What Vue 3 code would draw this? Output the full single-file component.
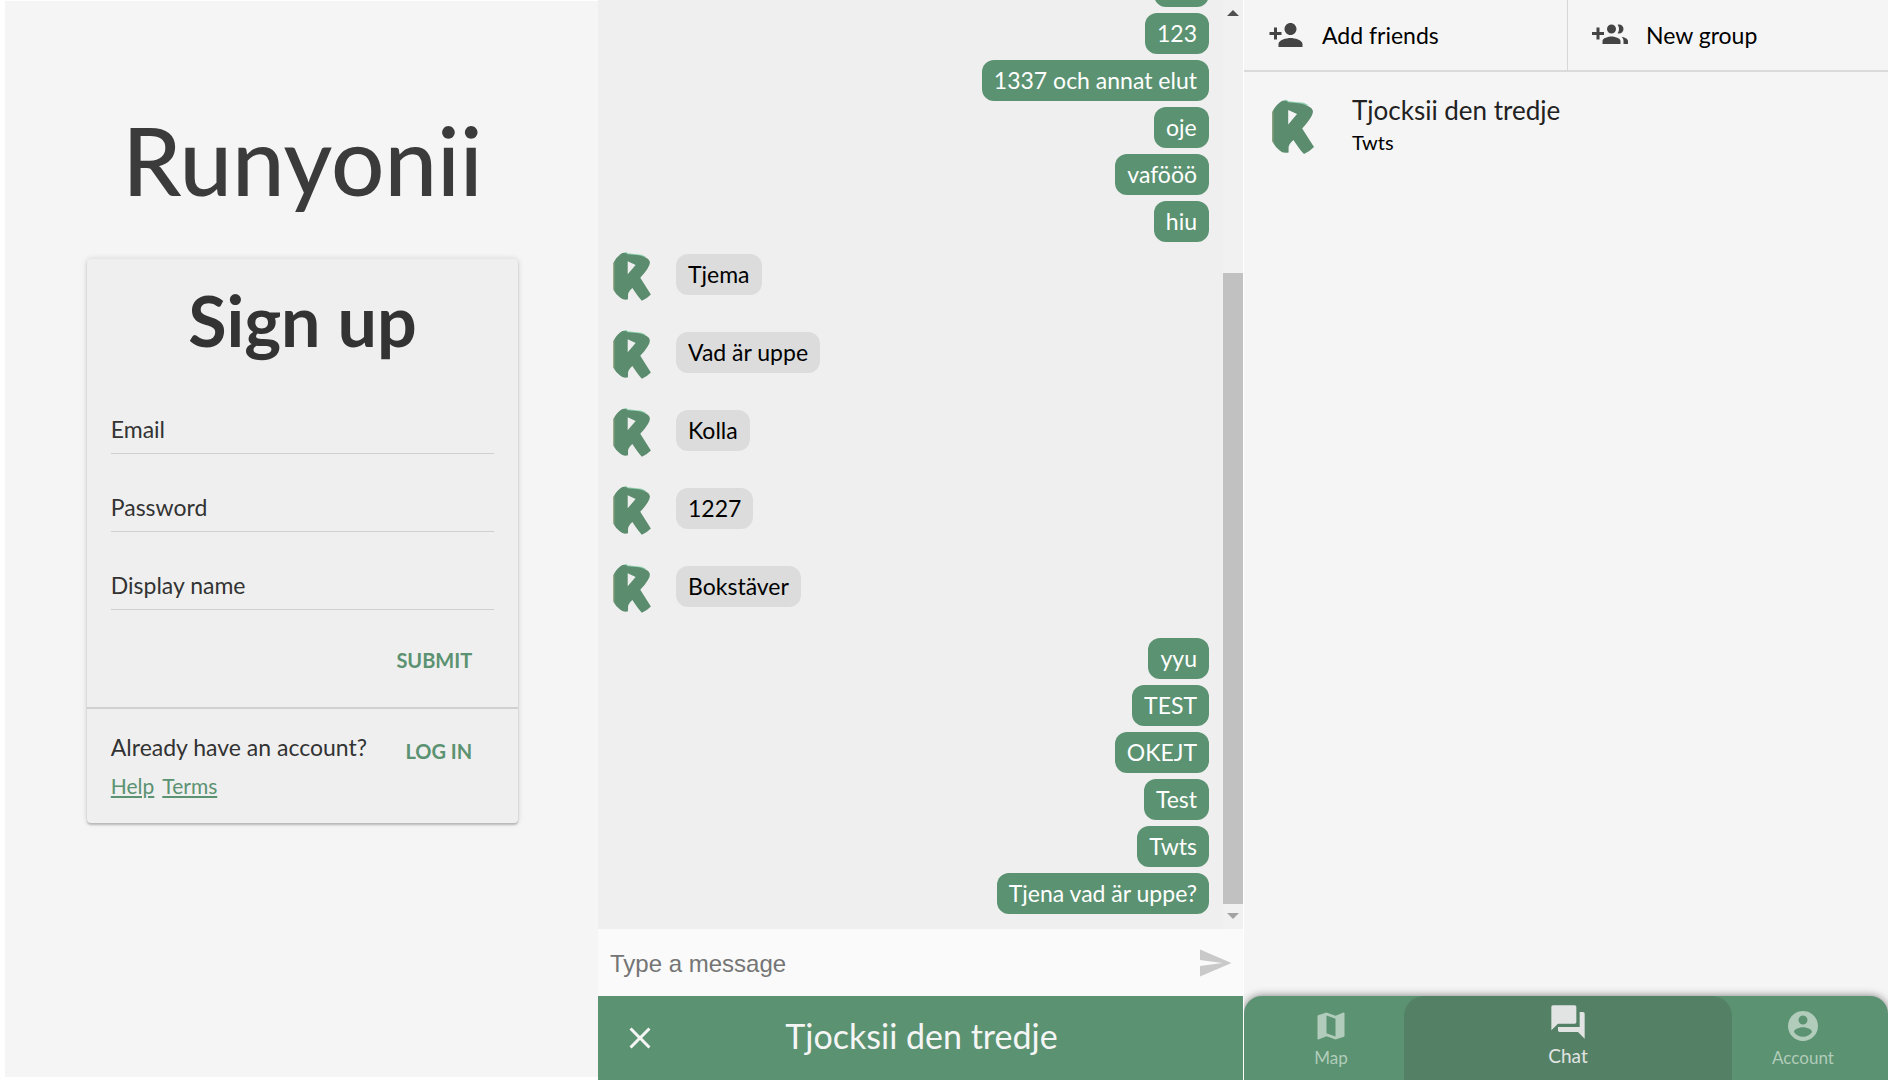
<script setup>
import { ref } from 'vue'

const fields = [
  { id: 'email', label: 'Email', type: 'email' },
  { id: 'password', label: 'Password', type: 'password' },
  { id: 'name', label: 'Display name', type: 'text' }
]

const messages = [
  { own: true, text: '' },
  { own: true, text: '123' },
  { own: true, text: '1337 och annat elut' },
  { own: true, text: 'oje' },
  { own: true, text: 'vafööö' },
  { own: true, text: 'hiu' },
  { own: false, text: 'Tjema' },
  { own: false, text: 'Vad är uppe' },
  { own: false, text: 'Kolla' },
  { own: false, text: '1227' },
  { own: false, text: 'Bokstäver' },
  { own: true, text: 'yyu' },
  { own: true, text: 'TEST' },
  { own: true, text: 'OKEJT' },
  { own: true, text: 'Test' },
  { own: true, text: 'Twts' },
  { own: true, text: 'Tjena vad är uppe?' }
]

const draft = ref('')
</script>

<template>
  <div class="page">
    <svg class="defs" aria-hidden="true">
      <defs>
        <linearGradient id="leaf" x1="0" x2="1" y1="0" y2="0">
          <stop offset="0" stop-color="#93a583" />
          <stop offset="0.06" stop-color="#5b8c6e" />
        </linearGradient>
        <symbol id="logo" viewBox="0 0 114 148">
          <path fill="#8ccfae" d="M35 0 Q42 0 44 4 L86 8 L100 15 L40 14 Z" />
          <path fill="url(#leaf)" fill-rule="evenodd" d="M0 33 Q14 10 28 3 Q38 0 44 7 L78 10 Q108 17 111 30 Q113 44 82 78 L114 128 Q100 142 87 147 Q80 142 58 109 Q46 120 45 128 V143 Q30 147 20 137 Q10 130 0 113 Z M44 28 V67 L68 39 Z" />
        </symbol>
      </defs>
    </svg>

    <section class="signup">
      <h1>Runyonii</h1>
      <div class="card">
        <form class="form" @submit.prevent>
          <h2>Sign up</h2>
          <div v-for="f in fields" :key="f.id" class="field">
            <input :id="f.id" :type="f.type" />
            <label :for="f.id">{{ f.label }}</label>
          </div>
          <button class="action submit" type="submit">SUBMIT</button>
        </form>
        <div class="foot">
          <div class="foot-row">
            <span>Already have an account?</span>
            <button class="action" type="button">LOG IN</button>
          </div>
          <div class="links"><a href="#help">Help</a><a href="#terms">Terms</a></div>
        </div>
      </div>
    </section>

    <section class="chat">
      <div class="scroll">
        <div class="messages">
          <template v-for="(m, i) in messages" :key="i">
            <p v-if="m.own" class="bubble own">{{ m.text }}</p>
            <div v-else class="received">
              <svg class="avatar"><use href="#logo" /></svg>
              <p class="bubble">{{ m.text }}</p>
            </div>
          </template>
        </div>
        <div class="bar">
          <span class="arrow up"></span>
          <span class="before"></span>
          <span class="thumb"></span>
          <span class="arrow down"></span>
        </div>
      </div>
      <form class="compose" @submit.prevent>
        <input v-model="draft" type="text" placeholder="Type a message" aria-label="Type a message" />
        <button type="submit" aria-label="Send">
          <svg viewBox="0 0 24 24"><path d="M2.01 21 23 12 2.01 3 2 10l15 2-15 2z" /></svg>
        </button>
      </form>
      <header class="title">
        <button type="button" aria-label="Close">
          <svg viewBox="0 0 24 24"><path d="M19 6.41 17.59 5 12 10.59 6.41 5 5 6.41 10.59 12 5 17.59 6.41 19 12 13.41 17.59 19 19 17.59 13.41 12z" /></svg>
        </button>
        <h2>Tjocksii den tredje</h2>
      </header>
    </section>

    <section class="friends">
      <div class="tools">
        <button type="button">
          <svg viewBox="0 0 24 24"><path d="M15 12c2.21 0 4-1.79 4-4s-1.79-4-4-4-4 1.790-4 4 1.790 4 4 4zm-9-2V7H4v3H1v2h3v3h2v-3h3v-2H6zm9 4c-2.670 0-8 1.340-8 4v2h16v-2c0-2.660-5.330-4-8-4z" /></svg>
          Add friends
        </button>
        <button type="button">
          <svg viewBox="0 0 24 24"><path d="M13 13C11 13 7 14 7 16V18H19V16C19 14 15 13 13 13M19.620 13.160C20.450 13.880 21 14.820 21 16V18H24V16C24 14.460 21.630 13.500 19.620 13.160M13 11A3 3 0 0 0 16 8A3 3 0 0 0 13 5A3 3 0 0 0 10 8A3 3 0 0 0 13 11M18 11A3 3 0 0 0 21 8A3 3 0 0 0 18 5C17.680 5 17.370 5.050 17.080 5.140C17.650 5.950 18 6.940 18 8C18 9.060 17.650 10.040 17.080 10.850C17.370 10.950 17.680 11 18 11M8 10H5V7H3V10H0V12H3V15H5V12H8V10Z" /></svg>
          New group
        </button>
      </div>
      <ul class="list">
        <li>
          <svg class="avatar large"><use href="#logo" /></svg>
          <div>
            <h3>Tjocksii den tredje</h3>
            <p>Twts</p>
          </div>
        </li>
      </ul>
      <nav class="tabs">
        <a href="#map">
          <svg viewBox="0 0 24 24"><path d="M20.500 3l-.160.030L15 5.100 9 3 3.360 4.900c-.210.070-.360.250-.360.480V20.500c0 .280.220.500.500.500l.160-.030L9 18.900l6 2.100 5.640-1.900c.210-.070.360-.250.360-.480V3.500c0-.280-.220-.500-.500-.500zM15 19l-6-2.110V5l6 2.110V19z" /></svg>
          Map
        </a>
        <a href="#chat" class="active" aria-current="page">
          <svg viewBox="0 0 24 24"><path d="M21 6h-2v9H6v2c0 .550.450 1 1 1h11l4 4V7c0-.550-.450-1-1-1zm-4 6V3c0-.550-.450-1-1-1H3c-.550 0-1 .450-1 1v14l4-4h10c.550 0 1-.450 1-1z" /></svg>
          Chat
        </a>
        <a href="#account" class="last">
          <svg viewBox="0 0 24 24"><path d="M12 2C6.480 2 2 6.480 2 12s4.480 10 10 10 10-4.480 10-10S17.520 2 12 2zm0 3c1.660 0 3 1.340 3 3s-1.340 3-3 3-3-1.340-3-3 1.340-3 3-3zm0 14.200c-2.500 0-4.710-1.280-6-3.220.030-1.990 4-3.080 6-3.080 1.990 0 5.970 1.090 6 3.080-1.290 1.940-3.500 3.220-6 3.220z" /></svg>
          Account
        </a>
      </nav>
    </section>
  </div>
</template>

<style>
body {
  background: #fff;
}
</style>

<style scoped>
.page {
  box-sizing: border-box;
  display: grid;
  grid-template-columns: 593fr 645fr 1px 644fr;
  height: 100vh;
  padding: 0 0 1px 5px;
  font-family: Lato, "Open Sans", sans-serif;
  font-size: 23px;
  line-height: 29px;
  color: #000;
}

h1, h2, h3, p, ul {
  margin: 0;
  padding: 0;
}

button, input {
  box-sizing: border-box;
  margin: 0;
  padding: 0;
  border: 0;
  background: none;
  font: inherit;
  color: inherit;
}

svg {
  display: block;
  flex: none;
  width: 36px;
  height: 36px;
  fill: currentColor;
}

.defs {
  position: absolute;
  width: 0;
  height: 0;
}

.signup {
  display: flex;
  flex-direction: column;
  align-items: center;
  margin: 1px 0 3px;
  padding: 99px 0 0 2px;
  background: #f5f5f5;
  color: #333;
}

.signup h1 {
  margin-bottom: 39px;
  font-size: 94px;
  line-height: 120px;
  font-weight: 500;
  color: #3b3b3b;
}

.card {
  width: 73%;
  border-radius: 4px;
  background: #efefef;
  box-shadow: 0 2px 2px rgba(0, 0, 0, .2), 0 0 6px rgba(0, 0, 0, .14);
}

.form {
  display: flex;
  flex-direction: column;
  padding: 16px 24px 27px;
  border-bottom: 2px solid #d0d0d0;
}

.form h2 {
  margin-bottom: 11px;
  font-size: 70px;
  line-height: 90px;
  text-align: center;
}

.field {
  position: relative;
  height: 48px;
  margin-top: 30px;
}

.field input {
  width: 100%;
  height: 48px;
  border-bottom: 1px solid #d0d0d0;
}

.field label {
  position: absolute;
  top: 9px;
  left: 0;
}

.action {
  height: 40px;
  padding: 0 22px;
  font-size: 20px;
  font-weight: 700;
  color: #5b9271;
}

.submit {
  align-self: flex-end;
  margin-top: 30px;
}

.foot {
  padding: 22px 24px 23px;
}

.foot-row {
  display: flex;
  justify-content: space-between;
  height: 40px;
}

.foot-row span {
  padding-top: 2px;
  white-space: nowrap;
}

.links {
  display: flex;
  gap: 8px;
  font-size: 21px;
}

.links a {
  color: #5b9271;
}

.chat {
  display: flex;
  flex-direction: column;
  min-width: 0;
  min-height: 0;
  background: #efefef;
}

.scroll {
  display: flex;
  flex: 1;
  min-height: 0;
}

.messages {
  display: flex;
  flex: 1;
  flex-direction: column;
  justify-content: flex-end;
  overflow: hidden;
  padding: 0 14px 15px 15px;
}

.bubble {
  box-sizing: border-box;
  flex: none;
  min-width: 55px;
  min-height: 41px;
  padding: 6px 12px;
  border-radius: 12px;
  background: #dcdcdc;
}

.own {
  align-self: flex-end;
  margin-top: 6px;
  background: #5b9271;
  color: #fff;
}

.received {
  display: flex;
  flex: none;
  align-items: flex-start;
  box-sizing: border-box;
  height: 78px;
  padding-top: 12px;
  gap: 25px;
}

.avatar {
  width: 38px;
  height: 49px;
  margin-top: -2px;
}

.bar {
  display: flex;
  flex-direction: column;
  align-items: center;
  width: 20px;
  background: #f1f1f1;
}

.arrow {
  border: 6px solid transparent;
}

.up {
  margin: 4px 0 8px;
  border-bottom-color: #505050;
}

.down {
  margin: 9px 0 4px;
  border-top-color: #a3a3a3;
}

.before {
  flex: 249;
}

.thumb {
  flex: 631;
  width: 20px;
  background: #c1c1c1;
}

.compose {
  display: flex;
  align-items: center;
  height: 67px;
  padding: 0 10px 0 12px;
  background: #fafafa;
}

.compose input {
  flex: 1;
  min-width: 0;
  height: 67px;
  padding-top: 2px;
  font-family: "Liberation Sans", Arial, sans-serif;
  font-size: 24px;
}

.compose input::placeholder {
  color: #757575;
  opacity: 1;
}

.compose button {
  padding-top: 1px;
  color: #c9c9c9;
}

.title {
  display: grid;
  grid-template-columns: 60px 1fr 58px;
  align-items: center;
  height: 84px;
  padding: 0 24px;
  background: #5b9271;
  color: #f5f5f5;
}

.title h2 {
  padding-bottom: 4px;
  font-size: 34px;
  line-height: 44px;
  font-weight: 400;
  text-align: center;
}

.friends {
  display: flex;
  grid-column: 4;
  flex-direction: column;
  min-width: 0;
  background: #f5f5f5;
}

.tools {
  display: grid;
  grid-template-columns: 323fr 321fr;
  height: 70px;
  border-bottom: 2px solid #dadada;
}

.tools button {
  display: flex;
  align-items: center;
  gap: 18px;
  padding-left: 24px;
}

.tools button + button {
  border-left: 1px solid #d6d6d6;
}

.tools svg {
  color: #444;
}

.list {
  flex: 1;
  list-style: none;
}

.list li {
  display: flex;
  gap: 38px;
  padding: 21px 28px;
}

.large {
  width: 42px;
  height: 56px;
  margin-top: 6px;
}

.list h3 {
  font-size: 26px;
  line-height: 34px;
  font-weight: 400;
  color: #222;
}

.list p {
  font-size: 20px;
  line-height: 30px;
}

.tabs {
  display: flex;
  height: 84px;
  border-radius: 18px 18px 0 0;
  background: #5b9271;
  box-shadow: 0 0 8px rgba(0, 0, 0, .5);
  clip-path: inset(-12px 0 0 0);
}

.tabs a {
  display: flex;
  flex: 174;
  flex-direction: column;
  align-items: center;
  box-sizing: border-box;
  padding-top: 12px;
  gap: 3px;
  font-size: 17px;
  line-height: 22px;
  text-decoration: none;
  color: #b1ccba;
}

.tabs .last {
  flex: 170;
}

.tabs .active {
  flex: 328;
  margin: 0 -14px;
  padding-top: 6px;
  gap: 2px;
  border-radius: 20px 20px 0 0;
  background: #548165;
  font-size: 19px;
  line-height: 24px;
  color: #e2e4e3;
}

.active svg {
  width: 40px;
  height: 40px;
}
</style>
